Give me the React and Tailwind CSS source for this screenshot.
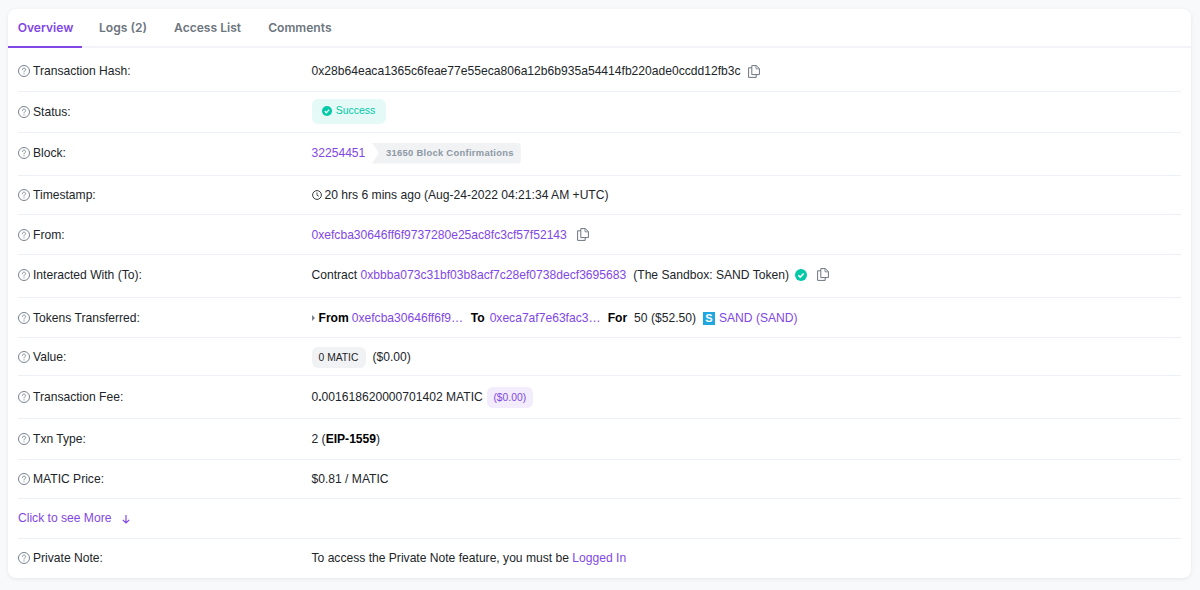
const font = { fontFamily: '"Liberation Sans", Arial, sans-serif' };

function QuestionIcon() {
  return (
    <svg width="12" height="12" viewBox="0 0 12 12" fill="none" className="shrink-0 text-[#77838f]">
      <circle cx="6" cy="6" r="5.5" stroke="currentColor" strokeWidth="1" />
      <path d="M4.400 4.700c0-1 .8-1.600 1.600-1.600s1.600.6 1.600 1.400c0 1.300-1.600 1.300-1.600 2.500" stroke="currentColor" strokeWidth="0.9" strokeLinecap="round" />
      <circle cx="6" cy="8.800" r="0.600" fill="currentColor" />
    </svg>
  );
}

function CopyIcon() {
  return (
    <svg width="12" height="13" viewBox="0 0 12 13" fill="none" className="shrink-0 text-[#6c757e]">
      <path d="M3.800 0.600h4.400l3.200 3v6H3.800z" fill="white" stroke="currentColor" strokeWidth="1" />
      <path d="M8 0.600v3.200h3.300" stroke="currentColor" strokeWidth="0.8" />
      <path d="M3.800 2.800H0.600v9.600h7.600V9.600" stroke="currentColor" strokeWidth="1" />
    </svg>
  );
}

function CheckBadge({ size = 12 }) {
  return (
    <svg width={size} height={size} viewBox="0 0 12 12" className="shrink-0">
      <circle cx="6" cy="6" r="6" fill="#00c9a7" />
      <path d="M3.300 6.200l1.900 1.900 3.500-3.700" fill="none" stroke="white" strokeWidth="1.500" />
    </svg>
  );
}

function Link({ children, className = "" }) {
  return <a className={`text-[#8247e5] ${className}`}>{children}</a>;
}

function Row({ label, height, last, children }) {
  return (
    <div className={`flex items-center ${height} ${last ? "" : "border-b border-[#e7eaf3]/70"}`}>
      <div className="flex w-[293.5px] shrink-0 items-center gap-[3px] text-[#212529]">
        <QuestionIcon />
        <span>{label}</span>
      </div>
      <div className="flex items-center text-[#212529]">{children}</div>
    </div>
  );
}

export default function App() {
  return (
    <div className="h-[590px] w-[1200px] bg-[#f8f9fa] pt-[9px] pl-2 text-[12.1px]" style={font}>
      <div className="h-[569px] w-[1183px] rounded-lg bg-white shadow-[0_1px_4px_rgba(151,164,175,0.2)]">
        {/* tabs */}
        <div className="flex h-[39px] border-b-2 border-[#e7eaf3]/50 font-['Inter'] text-[12.1px] font-semibold text-[#6c757e]">
          <div className="flex h-[39px] w-[74px] items-center justify-center border-b-2 border-[#8247e5] pt-px pl-px text-[#8247e5]">Overview</div>
          <div className="ml-[17px] flex items-center pt-[2px]">Logs (2)</div>
          <div className="ml-[27px] flex items-center pt-[2px]">Access List</div>
          <div className="ml-[27px] flex items-center pt-[2px]">Comments</div>
        </div>

        <div className="px-[10px]">
          <Row label="Transaction Hash:" height="h-[44px] pt-[4px]">
            <span>0x28b64eaca1365c6feae77e55eca806a12b6b935a54414fb220ade0ccdd12fb3c</span>
            <span className="ml-[7px]"><CopyIcon /></span>
          </Row>
          <Row label="Status:" height="h-[41px]">
            <span className="-mt-[2px] flex h-[25px] w-[74px] items-center justify-center gap-[4px] rounded-md bg-[#00c9a7]/10 text-[10.5px] text-[#00c9a7]">
              <CheckBadge size={10} />
              Success
            </span>
          </Row>
          <Row label="Block:" height="h-[43px] pb-[2px]">
            <Link>32254451</Link>
            <span className="ml-[6.5px] flex h-[21px] w-[149px] items-center justify-end rounded-r bg-[#f1f2f4] pr-[7px] text-[9.400px] font-bold tracking-[0.3px] text-[#8c98a4] [clip-path:polygon(0_0,100%_0,100%_100%,0_100%,7px_50%)]">
              31650 Block Confirmations
            </span>
          </Row>
          <Row label="Timestamp:" height="h-[39px]">
            <svg width="10" height="10" viewBox="0 0 10 10" fill="none" className="mr-[3px] shrink-0">
              <circle cx="5" cy="5" r="4.400" stroke="#212529" strokeWidth="0.9" />
              <path d="M5 2.500V5.200L6.800 6.300" stroke="#212529" strokeWidth="0.8" />
            </svg>
            <span>20 hrs 6 mins ago (Aug-24-2022 04:21:34 AM +UTC)</span>
          </Row>
          <Row label="From:" height="h-[40px] pt-px">
            <Link>0xefcba30646ff6f9737280e25ac8fc3cf57f52143</Link>
            <span className="ml-[10px]"><CopyIcon /></span>
          </Row>
          <Row label="Interacted With (To):" height="h-[43px] pb-[2px]">
            <span>Contract&nbsp;</span>
            <Link>0xbbba073c31bf03b8acf7c28ef0738decf3695683</Link>
            <span className="ml-[7px]">(The Sandbox: SAND Token)</span>
            <span className="ml-[6px]"><CheckBadge /></span>
            <span className="ml-[10px]"><CopyIcon /></span>
          </Row>
          <Row label="Tokens Transferred:" height="h-[40px] pt-[2px]">
            <span className="mr-[4px] h-0 w-0 border-y-[3px] border-l-[3px] border-y-transparent border-l-[#77838f]" />
            <b className="mr-[3px] text-black">From</b>
            <Link className="w-[119px]">0xefcba30646ff6f9…</Link>
            <b className="mr-[5px] text-black">To</b>
            <Link className="w-[118px]">0xeca7af7e63fac3…</Link>
            <b className="mr-[7px] text-black">For</b>
            <span>50 ($52.50)</span>
            <span className="mr-[4px] ml-[7px] flex h-[13px] w-3 items-center justify-center bg-[#1ea7e0] text-[11px] font-bold text-white">S</span>
            <Link>SAND (SAND)</Link>
          </Row>
          <Row label="Value:" height="h-[38px] pt-[2px]">
            <span className="flex h-[21px] w-[54px] items-center justify-center rounded-md bg-[#f1f2f4] text-[10.300px]">0 MATIC</span>
            <span className="ml-[7px]">($0.00)</span>
          </Row>
          <Row label="Transaction Fee:" height="h-[43px] pt-px">
            <span>0<b>.</b>001618620000701402 MATIC</span>
            <span className="ml-1 flex h-[21px] w-[46px] items-center justify-center rounded-md bg-[#8247e5]/10 text-[10.300px] text-[#8247e5]">($0.00)</span>
          </Row>
          <Row label="Txn Type:" height="h-[41px]">
            <span>2 (<b className="text-black">EIP-1559</b>)</span>
          </Row>
          <Row label="MATIC Price:" height="h-[39px]">
            <span>$0.81 / MATIC</span>
          </Row>
          <div className="flex h-[40px] items-center border-b border-[#e7eaf3]/70 text-[#8247e5]">
            <span>Click to see More</span>
            <svg width="10" height="10" viewBox="0 0 10 10" fill="none" className="ml-[10px]">
              <path d="M5 1v8M1.800 5.800L5 9l3.200-3.200" stroke="#8247e5" strokeWidth="1.200" />
            </svg>
          </div>
          <Row label="Private Note:" height="h-[39px]" last>
            <span>To access the Private Note feature, you must be&nbsp;</span>
            <Link>Logged In</Link>
          </Row>
        </div>
      </div>
    </div>
  );
}
